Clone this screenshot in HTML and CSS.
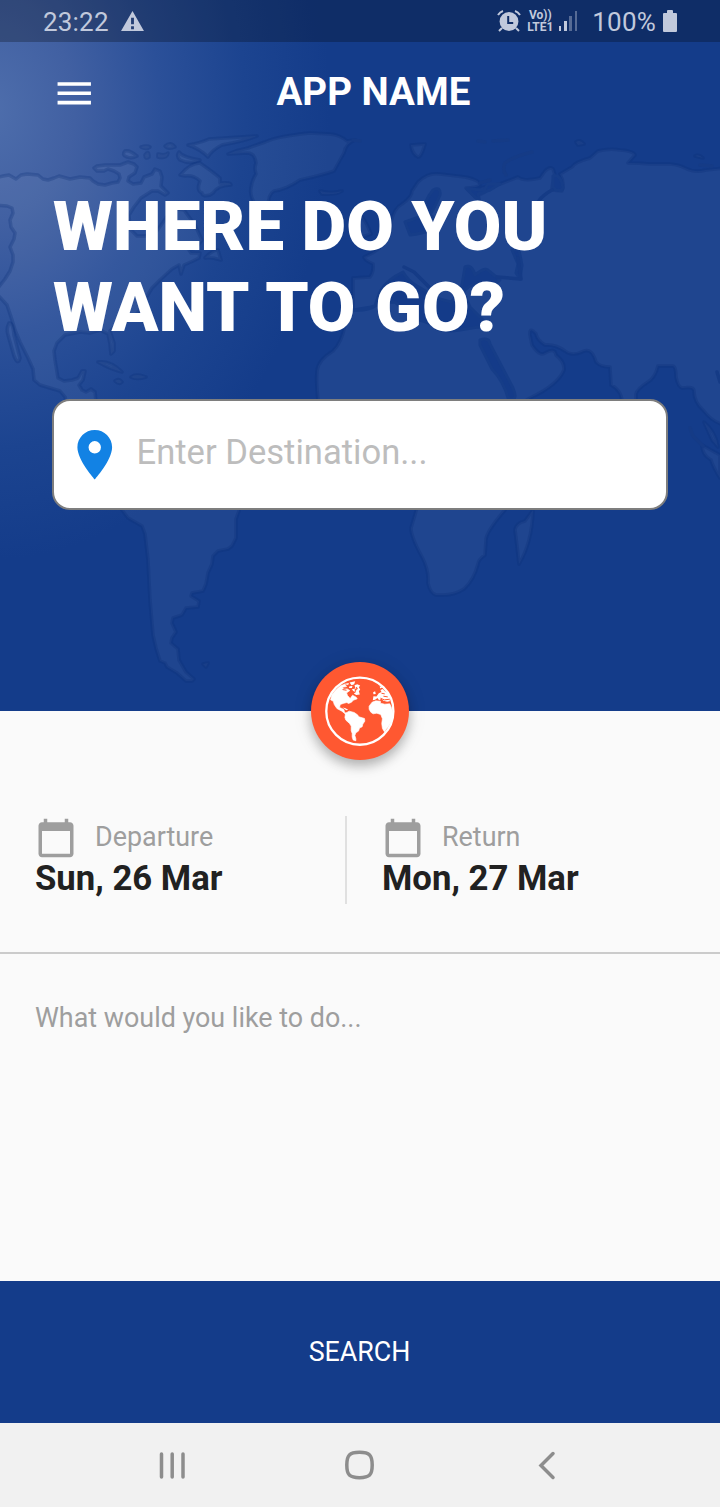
FILE: index.html
```html
<!DOCTYPE html>
<html lang="en">
<head>
<meta charset="utf-8">
<title>App Name</title>
<link rel="stylesheet" href="styles.css">
</head>
<body>
<div class="screen">
  <header class="hero">
    <svg class="map" viewBox="0 0 720 711" aria-hidden="true">
      <g class="land">
        <path d="M-5 178 3 176 9 175 16 179 21 175 27 174 38 175 43 179 48 180 54 178 59 176 70 179 80 177 90 178 93 181 98 184 105 185 112 183 118 182 120 178 119 174 114 171 108 169 104 171 97 171 94 168 97 166 105 165 120 165 128 162 134 164 137 167 135 173 129 177 128 181 133 184 141 183 144 177 152 174 155 169 160 171 162 177 161 186 168 193 165 195 158 191 152 191 141 198 134 207 129 215 130 229 137 236 145 236 156 232 166 218 172 208 184 210 195 225 202 240 196 248 189 250 191 253 200 253 199 258 193 261 184 265 181 274 179 265 172 269 160 280 152 288 146 298 142 308 132 319 115 326 110 331 114 343 114 351 111 354 110 344 108 334 100 330 90 333 80 332 65 335 57 343 54 351 55 360 58 378 64 381 72 380 78 378 82 371 85 371 83 380 79 385 82 390 86 392 91 389 95 392 96 402 92 430 150 420 200 440 245 470 240 508 236 519 236 538 232 546 228 549 218 551 213 556 212 564 208 573 206 584 203 591 192 593 191 596 199 601 198 607 186 608 182 615 173 618 172 623 176 632 172 638 171 643 178 649 179 660 186 672 194 679 192 681 186 681 177 673 167 667 165 663 160 661 156 648 153 635 150 600 148 560 145 534 142 526 128 518 122 510 110 495 105 440 68 410 65 397 60 391 40 385 34 380 33 369 28 358 20 342 15 330 12 320 7 305-5 292-2 288 5 279 10 271 13 262 13 255 10 247 14 239 15 233 11 227 10 220 13 213 12 208 7 206-5 205Z"/>
        <path d="M9 323Q13 322 14 335L20 358Q18 366 14 356L8 335Q6 329 9 323Z"/>
        <path d="M248 148Q259 144 265 142 278 136 310 133L330 134Q340 135 347 141L355 140Q346 143 344 153 340 160 334 171L328 173Q310 178 300 180 285 190 274 191 268 194 268 208L258 208Q249 197 251 188 252 180 256 174 254 168 256 163 255 153 247 153L228 154Q237 150 248 148Z"/>
        <path d="M188 145Q200 143 209 139L257 136Q245 141 222 145 212 150 208 157 200 149 188 145Z"/>
        <path d="M180 175Q190 163 200 163 213 172 220 178L220 183Q231 182 231 185 218 185 213 193L210 195Q202 197 202 193 196 191 200 181 194 175 185 176Z"/>
        <path d="M179 152Q182 157 200 160 190 165 180 160 176 156 179 152ZM125 151Q130 150 137 156 132 159 127 157 121 155 125 151ZM141 147Q147 145 150 147 146 150 141 147ZM165 146Q171 141 175 147 168 150 165 146ZM145 155Q149 149 149 157 145 160 145 155ZM158 154Q165 156 168 153 167 159 158 157Z"/>
        <path d="M320 191Q331 194 342 191 337 195 322 194ZM205 258Q212 250 218 250L221 260Q211 257 205 258ZM98 362Q110 360 122 372 110 369 98 362ZM131 377Q136 373 146 377 136 380 131 377ZM115 381Q119 378 122 382 119 385 115 381ZM203 664 208 663 206 667Z"/>
        <path d="M480 188Q490 186 500 184L518 177Q524 182 540 178L545 171Q550 166 553 169L555 175Q552 184 552 190L562 191Q565 183 560 174L572 167Q575 162 590 158L598 151Q610 148 620 150 634 151 635 155L628 163Q640 163 650 164L670 164Q680 165 685 168 694 173 706 170L725 168 725 425Q713 423 703 410 694 402 694 391 694 386 682 388 678 387 676 377 676 365 672 366L658 366Q655 378 648 382 637 389 636 394L636 402 650 450 622 410Q624 391 611 385L610 367Q600 367 596 362 592 348 584 351 572 357 565 351 555 344 545 345 537 340 536 334 529 326 530 335L532 345Q540 357 545 353 555 347 556 355 565 362 564 370 558 385 530 398L510 410 480 450 540 460 505 510Q486 532 486 540L485 555Q478 560 478 564 474 580 464 589 455 595 443 595L436 595Q430 593 428 583 429 570 422 557 411 537 411 528L417 508 400 450 330 430 318 400Q316 382 317 371 318 360 333 351 342 342 345 325L353 310 353 278 370 277Q374 272 373 264 364 260 364 257 376 252 382 245 392 236 391 222 394 208 402 204 412 197 412 191L418 182Q428 172 440 174L465 177Q480 180 480 185 477 188 466 188L475 197 485 192Z"/>
        <path d="M411 145 425 144Q421 158 418 157 412 154 411 145ZM576 142Q580 139 584 144L578 145ZM695 156Q699 154 703 158ZM354 211Q363 213 371 234L360 238ZM515 530Q516 523 525 521L533 510Q532 543 519 564 517 545 515 530ZM704 422Q716 432 718 447L712 440ZM702 445 720 455 720 478Q713 467 711 460 702 455 702 445Z"/>
      </g>
      <g class="sea">
        <path d="M353 310Q368 311 375 306 378 296 381 290 388 279 403 272 408 281 417 286 427 291 432 297L451 302Q461 292 462 285L465 267Q472 264 475 275 486 266 489 271L500 280 492 286Q479 281 474 284 462 290 464 294L470 307 484 321Q488 329 478 327L460 330Q438 333 434 326 424 320 416 320L395 302Q385 302 371 307Z"/>
        <path d="M480 340Q489 337 490 344L513 388Q519 402 508 398 504 382 492 369L480 345ZM425 215Q422 204 433 190 441 186 440 195 436 205 430 215L440 222Q435 232 410 235L405 222ZM553 176C560 174 562 182 563 188 561 192 554 191 553 186ZM519 250 522 265 520 279 516 273 518 264 512 250ZM467 189 484 190 488 184 500 184 490 190 478 194 480 202Z"/>
      </g>
      <path class="coast" d="M404 267 414 272 431 289M497 277 521 279 518 258M552 190Q534 200 535 214M506 175Q502 170 505 163 512 157 532 152M480 183 490 180M478 141 485 142M493 141 508 140M353 140 360 141M700 165 712 166M717 372 720 382M690 428 693 436 703 446"/>
    </svg>

    <div class="statusbar">
      <span class="clock">23:22</span>
      <svg class="warning" viewBox="0 0 24 22"><path fill="currentColor" fill-rule="evenodd" d="M12 0 24 21H0ZM10.5 7h3v7h-3ZM10.5 16h3v3h-3Z"/></svg>
      <svg class="alarm" viewBox="0 0 24 22"><g fill="none" stroke="currentColor" stroke-width="2"><path d="M1 5Q3 2 6 1M23 5Q21 2 18 1M5 18 2 21M19 18 22 21"/></g><circle cx="12" cy="11.5" r="9.4" fill="currentColor"/><path class="alarm-hands" d="M11.2 6v7h5"/></svg>
      <span class="volte"><span>Vo))</span><span>LTE1</span></span>
      <svg class="signal" viewBox="0 0 20 22"><path fill="currentColor" d="M1 16h2v5H1zM6 11h3v10H6z"/><path fill="currentColor" opacity=".4" d="M11 6h3v15h-3zM17 1h2v20h-2z"/></svg>
      <span class="percent">100%</span>
      <svg class="battery" viewBox="0 0 14 23"><path fill="currentColor" d="M4 1Q4 0 5 0h4q1 0 1 1v2h3q1 0 1 1v17q0 1-1 1H1q-1 0-1-1V4q0-1 1-1h3Z"/></svg>
    </div>

    <div class="appbar">
      <svg class="menu" viewBox="0 0 24 24"><path fill="#fff" d="M3 18h18v-2H3zm0-5h18v-2H3zm0-7v2h18V6z"/></svg>
      <h1 class="title">APP NAME</h1>
    </div>

    <h2 class="headline"><span class="line-one">WHERE DO YOU</span><br><span class="line-two">WANT TO GO?</span></h2>

    <div class="search-box">
      <svg class="pin" viewBox="0 0 24 24"><path fill="#1282e4" d="M12 2C8.13 2 5 5.13 5 9c0 5.25 7 13 7 13s7-7.75 7-13c0-3.870-3.130-7-7-7zm0 9.500a2.500 2.500 0 1 1 0-5 2.500 2.500 0 0 1 0 5z"/></svg>
      <span class="placeholder">Enter Destination...</span>
    </div>

    <div class="fab">
      <svg viewBox="33 36 295 295">
        <circle cx="180" cy="184" r="101" fill="none" stroke="#fff" stroke-width="7"/>
        <path fill="#fff" stroke="#fff" stroke-width="2" d="M92 150 96 134 110 118 123 107 135 103 140 110 128 112 131 118 142 117 150 122 140 129 143 137 151 146 158 136 169 142 172 147 160 151 155 157 146 161 141 158 132 160 121 164 119 173 126 176 132 179 134 188 142 191 138 194 126 184 111 176 103 164 100 154Z"/>
        <path fill="#fff" d="M131 102 147 99 145 105ZM149 98 166 94 163 103 155 106ZM164 106 172 103 181 107 177 112 181 119 177 124 180 134 169 135 162 131 168 127 160 123 156 118 167 116ZM149 109 158 108 156 114 147 114ZM128 173 137 175 145 180 139 181Z"/>
        <path fill="#fff" stroke="#fff" stroke-width="2" d="M137 190 148 184 163 188 173 195 177 201 194 206 195 214 189 223 187 231 179 235 176 244 168 249 165 257 168 267 168 273 160 271 157 262 157 251 154 243 154 229 149 221 138 211 135 203Z"/>
        <path fill="#fff" stroke="#fff" stroke-width="2" d="M208 178 208 169 217 157 228 153 242 154 242 160 255 163 270 162 275 173 280 190 278 207 269 226 254 246 248 236 246 221 248 207 243 194 231 190 220 192 213 187Z"/>
        <path fill="#fff" d="M219 151 221 139 230 140 237 130 245 126 242 120 249 117 255 124 264 129 271 142 270 154 262 156 251 153 245 147 238 151 233 144 226 150ZM220 127 226 124 228 132 221 133ZM240 109 248 113 241 116Z"/>
        <path fill="none" stroke="#ff5831" stroke-width="3" d="M242 145 254 150 270 148M251 139 264 141M245 130 255 132M164 120 174 116M128 119 140 121M171 111 166 126"/>
      </svg>
    </div>
  </header>

  <main class="details">
    <section class="dates">
      <div class="date departure">
        <div class="date-label"><svg viewBox="0 0 24 24"><path fill="currentColor" d="M20 3h-1V1h-2v2H7V1H5v2H4c-1.100 0-2 .9-2 2v16c0 1.100.9 2 2 2h16c1.100 0 2-.9 2-2V5c0-1.100-.9-2-2-2zm0 18H4V8h16z"/></svg><span>Departure</span></div>
        <strong>Sun, 26 Mar</strong>
      </div>
      <div class="date return">
        <div class="date-label"><svg viewBox="0 0 24 24"><path fill="currentColor" d="M20 3h-1V1h-2v2H7V1H5v2H4c-1.100 0-2 .9-2 2v16c0 1.100.9 2 2 2h16c1.100 0 2-.9 2-2V5c0-1.100-.9-2-2-2zm0 18H4V8h16z"/></svg><span>Return</span></div>
        <strong>Mon, 27 Mar</strong>
      </div>
    </section>
    <p class="activity">What would you like to do...</p>
  </main>

  <button class="search-button">SEARCH</button>

  <nav class="navbar">
    <svg viewBox="0 0 30 30"><path d="M4.500 4v23M15.200 4v23M26 4v23"/></svg>
    <svg viewBox="0 0 30 30"><path d="M14.500 2.300C24.500 2.300 27.200 5 27.200 15S24.500 27.700 14.500 27.700 1.800 25 1.800 15 4.500 2.300 14.500 2.300Z"/></svg>
    <svg viewBox="0 0 30 30"><path d="M21 3.500 9 15.500 21 27.500"/></svg>
  </nav>
</div>
</body>
</html>
```
FILE: styles.css
```css
* { box-sizing: border-box; }
body { margin: 0; font-family: Roboto, "Liberation Sans", sans-serif; }
.screen { width: 720px; height: 1507px; display: flex; flex-direction: column; background: #fafafa; overflow: hidden; }

.hero {
  position: relative;
  height: 711px;
  flex: none;
  background: radial-gradient(ellipse 340px 450px at -10px 110px, #4e6eac 0%, #4160a2 25%, #2b5099 50%, #1c4490 75%, #143c8a 100%);
}
.map { position: absolute; inset: 0; width: 720px; height: 711px; }
.land path { fill: rgba(255, 255, 255, .052); stroke: rgba(10, 45, 120, .28); stroke-width: 3.5; stroke-linejoin: round; }
.sea path { fill: #143b89; stroke: #163d88; stroke-width: 3; stroke-linejoin: round; }
.coast { fill: none; stroke: #153b86; stroke-width: 3.5; stroke-linecap: round; stroke-linejoin: round; }

.statusbar { position: relative; height: 42px; padding: 1px 43px 0 43px; display: flex; align-items: center; color: #c1c9dc; background: rgba(0, 0, 0, .25); font-size: 26px; }
.clock { letter-spacing: .2px; }
.warning { width: 23px; height: 21px; margin-left: 12px; }
.alarm { width: 24px; height: 22px; margin: -2px 0 0 auto; }
.alarm-hands { fill: none; stroke: #102d67; stroke-width: 2; }
.volte { display: flex; flex-direction: column; align-items: center; width: 26px; margin-left: 6px; font-size: 12px; line-height: 11.500px; font-weight: 700; }
.signal { width: 20px; height: 22px; margin: -2px 0 0 5px; }
.percent { margin-left: 14px; letter-spacing: .2px; }
.battery { width: 14px; height: 23px; margin-left: 7px; }

.appbar { position: relative; height: 98px; padding-left: 52px; display: flex; align-items: center; }
.menu { width: 44.500px; height: 44.500px; margin-top: 4px; }
.title { margin: 2px 0 0 180px; color: #fff; font-size: 38.500px; line-height: 46px; font-weight: 700; white-space: nowrap; }

.headline { position: relative; margin: 46px 0 0 53px; color: #fff; font-size: 69px; line-height: 81px; font-weight: 900; white-space: nowrap; }
.line-one { letter-spacing: .1px; }
.line-two { word-spacing: 2.500px; }

.search-box { position: relative; width: 616px; height: 111px; margin: 51px 0 0 52px; padding-left: 11px; display: flex; align-items: center; background: #fff; border: 2px solid #7e7e7e; border-radius: 18px; }
.pin { width: 59.500px; height: 59.500px; }
.placeholder { margin: -5px 0 0 12px; font-size: 34.600px; color: #bdbdbd; white-space: nowrap; }

.fab { position: absolute; left: 311px; top: 662px; width: 98px; height: 98px; border-radius: 50%; background: #ff5831; box-shadow: 0 6px 11px rgba(0, 0, 0, .24), 0 2px 20px rgba(0, 0, 0, .1); }
.fab svg { display: block; width: 98px; height: 98px; }

.details { flex: 1; display: flex; flex-direction: column; }
.dates { height: 243px; padding-top: 105px; display: grid; grid-template-columns: 347px 1fr; align-items: start; border-bottom: 2px solid #cbcbcb; }
.date { height: 88px; padding-left: 35px; color: #212121; }
.departure { border-right: 2px solid #e0e0e0; }
.date-label { display: flex; align-items: center; height: 42px; margin-top: 1px; color: #9e9e9e; font-size: 26.900px; }
.date-label svg { width: 42px; height: 42px; margin-right: 18px; }
.date-label span { margin-top: -3px; }
.date strong { display: block; font-size: 34.700px; line-height: 38px; font-weight: 700; white-space: nowrap; }
.activity { margin: 48px 0 0 35px; color: #9e9e9e; font-size: 26.900px; line-height: 33px; }

.search-button { flex: none; height: 142px; border: 0; padding: 0 1px 0 0; color: #fff; background: #143c8a; font: 400 26.800px Roboto, sans-serif; }
.navbar { flex: none; height: 84px; padding: 0 158px 0 157px; display: flex; align-items: center; justify-content: space-between; background: #f1f1f1; }
.navbar svg { width: 30px; height: 30px; fill: none; stroke: #8d8d8d; stroke-width: 3.500; stroke-linecap: round; stroke-linejoin: miter; }
```
